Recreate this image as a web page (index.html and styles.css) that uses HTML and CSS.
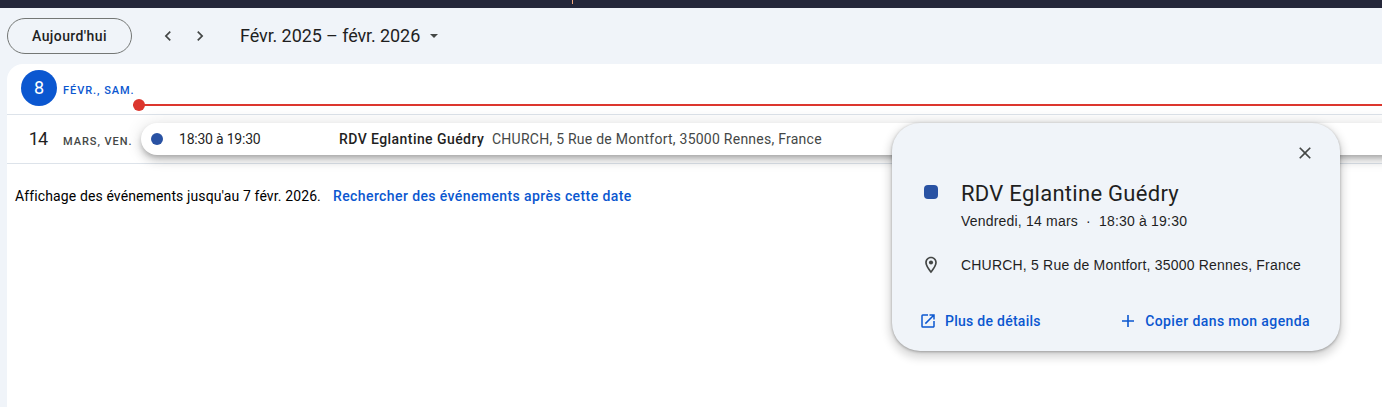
FILE: index.html
```html
<!DOCTYPE html>
<html lang="fr">
<head>
<meta charset="utf-8">
<title>Agenda</title>
<link rel="stylesheet" href="styles.css">
</head>
<body>
<div class="topbar"><span class="topbar-mark"></span></div>
<header class="toolbar">
  <button class="today"><span>Aujourd'hui</span></button>
  <svg class="chevron" width="20" height="20" viewBox="0 0 24 24"><path d="M15.41 7.41 14 6l-6 6 6 6 1.41-1.41L10.83 12z"/></svg>
  <svg class="chevron next" width="20" height="20" viewBox="0 0 24 24"><path d="M10 6 8.59 7.41 13.17 12l-4.58 4.59L10 18l6-6z"/></svg>
  <h1 class="range"><span>Févr. 2025 – févr. 2026</span></h1>
  <svg class="caret" width="8" height="4" viewBox="0 0 8 4"><path d="M0 0h8L4 4z"/></svg>
</header>
<main class="agenda">
  <section class="day">
    <div class="num current">8</div>
    <div class="label active"><span>FÉVR., SAM.</span></div>
    <div class="now"></div>
  </section>
  <section class="day second">
    <div class="num">14</div>
    <div class="label"><span>MARS, VEN.</span></div>
    <div class="event">
      <i class="dot"></i>
      <span class="time"><span>18:30 à 19:30</span></span>
      <b class="name">RDV Eglantine Guédry</b>
      <span class="place">CHURCH, 5 Rue de Montfort, 35000 Rennes, France</span>
    </div>
  </section>
  <footer class="more"><span class="until">Affichage des événements jusqu'au 7 févr. 2026.</span><a class="search">Rechercher des événements après cette date</a></footer>
</main>
<aside class="popup">
  <div class="close"><svg width="20" height="20" viewBox="0 0 24 24"><path d="M19 6.41 17.59 5 12 10.59 6.41 5 5 6.41 10.59 12 5 17.59 6.41 19 12 13.41 17.59 19 19 17.59 13.41 12z"/></svg></div>
  <div class="heading">
    <i class="swatch"></i>
    <div>
      <h2><span>RDV Eglantine Guédry</span></h2>
      <p class="detail">Vendredi, 14 mars<span class="sep">·</span>18:30 à 19:30</p>
    </div>
  </div>
  <div class="location">
    <svg width="20" height="20" viewBox="0 0 24 24"><path d="M12 2C8.13 2 5 5.13 5 9c0 5.25 7 13 7 13s7-7.75 7-13c0-3.87-3.13-7-7-7zM7 9c0-2.76 2.24-5 5-5s5 2.24 5 5c0 2.88-2.88 7.19-5 9.88C9.92 16.21 7 11.85 7 9z"/><circle cx="12" cy="9" r="2.5"/></svg>
    <p class="detail">CHURCH, 5 Rue de Montfort, 35000 Rennes, France</p>
  </div>
  <div class="actions">
    <a class="action"><svg width="18" height="18" viewBox="0 0 24 24"><path d="M19 19H5V5h7V3H5a2 2 0 0 0-2 2v14a2 2 0 0 0 2 2h14c1.100 0 2-.9 2-2v-7h-2v7zM14 3v2h3.590l-9.830 9.830 1.410 1.410L19 6.410V10h2V3h-7z"/></svg><span class="details">Plus de détails</span></a>
    <a class="action"><svg width="18" height="18" viewBox="0 0 18 18"><path d="M8.200 3h1.600v5.200H15v1.600H9.800V15H8.200V9.800H3V8.200h5.200z"/></svg><span class="copy">Copier dans mon agenda</span></a>
  </div>
</aside>
</body>
</html>
```
FILE: styles.css
```css
* { box-sizing: border-box; }
body {
  margin: 0;
  height: 407px;
  overflow: hidden;
  position: relative;
  background: #f0f4f9;
  color: #1f1f1f;
  font: 14px/20px Roboto, sans-serif;
}
h1, h2, p { margin: 0; font-weight: 400; }
svg { display: block; flex: none; fill: #444746; }

.topbar { height: 8px; background: #24273a; padding-left: 572px; }
.topbar-mark { display: block; width: 1px; height: 4px; background: #f5a97f; }

.toolbar { height: 56px; padding-left: 7px; display: flex; align-items: center; }
.today {
  width: 125px;
  height: 36px;
  padding: 0;
  border: 1px solid #747775;
  border-radius: 18px;
  background: none;
  color: #1f1f1f;
  font: 500 14px/20px Roboto, sans-serif;
  letter-spacing: 0.4px;
}
.chevron { margin-left: 26px; }
.next { margin-left: 12px; }
.range { margin-left: 30px; width: 180px; white-space: nowrap; font-size: 18px; line-height: 24px; letter-spacing: -.09px; }
.caret { margin-left: 10px; }

.agenda { margin-left: 7px; height: 343px; background: #fff; border-top-left-radius: 16px; overflow: hidden; }
.day { height: 51px; border-bottom: 1px solid #dde3ea; display: flex; }
.second { height: 49px; }
.num { width: 36px; height: 36px; margin: 6px 0 0 14px; line-height: 36px; font-size: 18px; text-align: center; flex: none; }
.second .num { height: 48px; margin-top: 0; padding-right: 2px; line-height: 48px; letter-spacing: -.8px; }
.current { border-radius: 50%; background: #0b57d0; color: #fff; }
.label { width: 70px; margin-left: 6px; padding-top: 17px; font-size: 11px; font-weight: 500; letter-spacing: 0.95px; white-space: nowrap; flex: none; color: #444746; }
.active { color: #0b57d0; }
.now { flex: 1; height: 2px; margin-top: 40px; background: #dc362e; display: flex; align-items: center; }
.now::before { content: ""; width: 12px; height: 12px; flex: none; border-radius: 50%; background: #dc362e; }
.event {
  flex: 1;
  height: 32px;
  margin: 8px -20px 0 8px;
  padding-left: 10px;
  border-radius: 16px;
  background: #fff;
  box-shadow: 0 6px 10px rgba(0,0,0,.14), 0 1px 18px rgba(0,0,0,.12), 0 3px 5px -1px rgba(0,0,0,.2);
  display: flex;
  align-items: center;
  white-space: nowrap;
}
.dot { width: 12px; height: 12px; border-radius: 50%; background: #2952a3; }
.time { width: 160px; margin-left: 16px; letter-spacing: -.22px; }
.name { font-weight: 500; width: 153px; letter-spacing: .43px; }
.place { color: #444746; letter-spacing: .25px; }
.more { padding: 22px 8px; display: flex; color: #000; white-space: nowrap; }
.until { width: 318px; letter-spacing: .12px; }
.search, .action { color: #0b57d0; font-weight: 500; letter-spacing: .4px; }

.popup {
  position: absolute;
  left: 892px;
  top: 123px;
  width: 448px;
  height: 228px;
  padding: 20px 31px 0 28px;
  border-radius: 28px;
  background: #f0f4f9;
  box-shadow: 0 1px 3px rgba(0,0,0,.3), 0 4px 8px 3px rgba(0,0,0,.15);
}
.close { display: flex; justify-content: flex-end; margin-right: -6px; }
.heading { display: flex; padding: 16px 0 0 4px; }
.swatch { width: 14px; height: 14px; margin: 6px 23px 0 0; border-radius: 4px; background: #2952a3; }
h2 { padding-top: 1px; font-size: 22px; line-height: 28px; letter-spacing: .28px; white-space: nowrap; }
.detail { margin-top: 3px; font: 14px/20px "Liberation Sans", Arial, sans-serif; letter-spacing: .2px; white-space: nowrap; }
.sep { margin: 0 8px; }
.location { display: flex; align-items: center; gap: 20px; margin: 24px 0 0 1px; }
.location .detail { margin: 0; }
.actions { display: flex; justify-content: space-between; margin: 36px -1px 0 0; }
.action { display: flex; align-items: center; gap: 8px; white-space: nowrap; }
.action svg { margin-left: -1px; fill: #0b57d0; }
.details { letter-spacing: .27px; }
```
